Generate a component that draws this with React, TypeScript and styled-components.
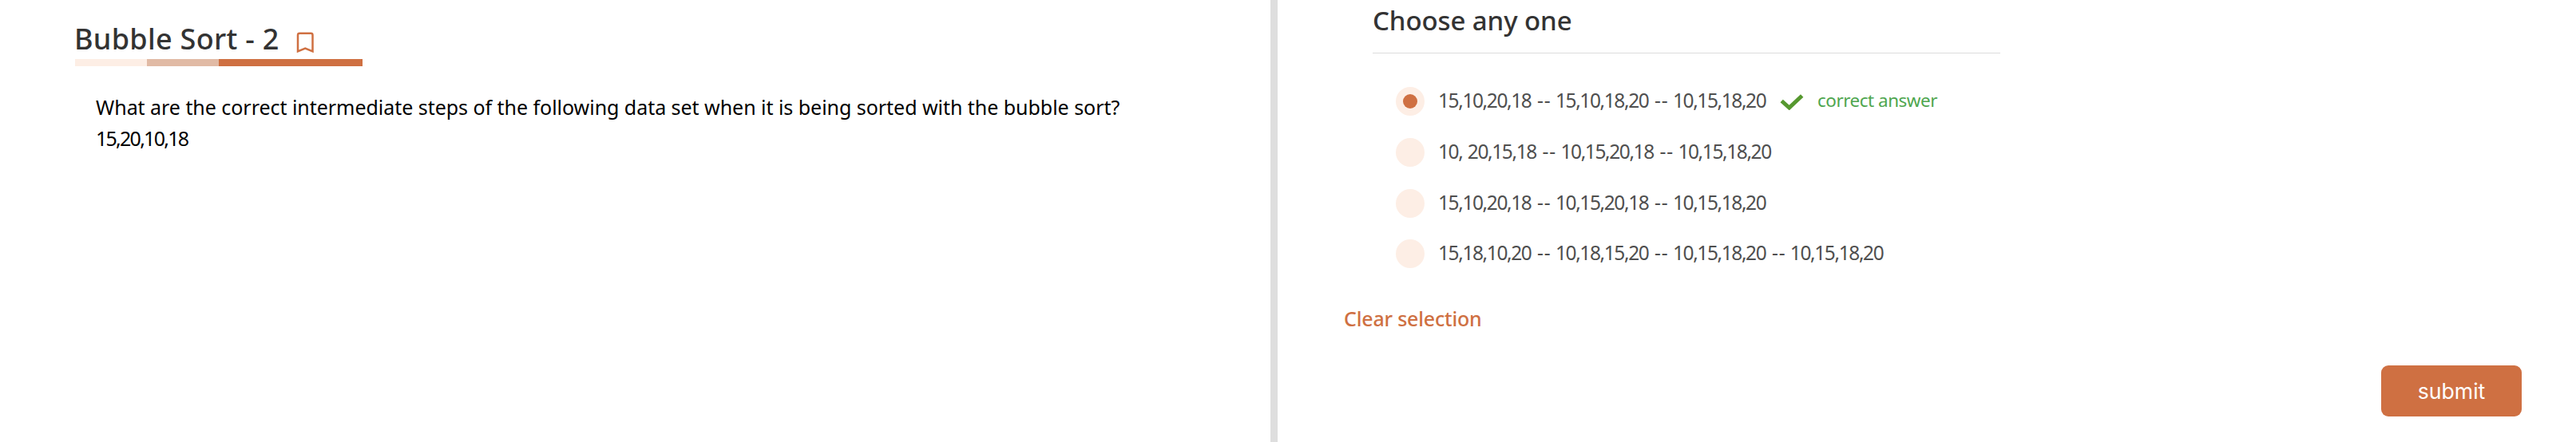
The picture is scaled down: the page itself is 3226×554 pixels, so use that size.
import React, { Fragment } from "react";
import styled, { createGlobalStyle } from "styled-components";

const accent = "#cf7042";

const GlobalStyle = createGlobalStyle`
  *, *::before, *::after { box-sizing: border-box; }
  body { margin: 0; background: #fff; font-family: "Noto Sans", "Open Sans", sans-serif; }
`;

const Page = styled.main`
  display: flex;
  height: 554px;
  overflow: hidden;
`;

const QuestionPane = styled.section`
  width: 1591px;
  flex: none;
  padding: 29px 0 0 94px;
`;

const Divider = styled.div`
  width: 9px;
  flex: none;
  background: #dedede;
`;

const AnswerPane = styled.section`
  flex: 1;
  display: flex;
  flex-direction: column;
  padding: 6px 68px 32px 82px;
`;

const TextLine = styled.span<{ $tracking?: number; $words?: number }>`
  display: block;
  white-space: nowrap;
  letter-spacing: ${(p) => p.$tracking ?? 0}px;
  word-spacing: ${(p) => p.$words ?? 0}px;
`;

const Separator = styled.span`
  margin: 0 -1.2px 0 1.2px;
  letter-spacing: 1px;
  word-spacing: -1px;
`;

const TitleRow = styled.header`
  display: flex;
  height: 45px;
`;

const Title = styled.h1`
  margin: 0 0 0 -1px;
  width: 278px;
  font-size: 36px;
  line-height: 40px;
  font-weight: 500;
  color: #333;
`;

const BookmarkIcon = styled.svg`
  margin-top: 11px;
  width: 23px;
  height: 28px;
`;

const Underline = styled.div`
  display: flex;
  width: 360px;
  height: 9px;
`;

const Segment = styled.span<{ $grow: number; $color: string }>`
  flex: ${(p) => p.$grow};
  background: ${(p) => p.$color};
`;

const Question = styled.div`
  margin: 32px 0 0 26px;
  font-size: 25px;
  line-height: 39px;
  color: #000;
`;

const Prompt = styled.h2`
  margin: 0 0 0 37px;
  width: 786px;
  height: 61px;
  border-bottom: 1px solid #dcdcdc;
  font-size: 33px;
  line-height: 40px;
  font-weight: 500;
  color: #333;
`;

const Options = styled.div`
  margin: 42px 0 0 66px;
  height: 255px;
`;

const Option = styled.label`
  display: flex;
  align-items: flex-start;
  height: 63.75px;
  font-size: 24.5px;
  line-height: 33px;
  color: #4f4f4f;
`;

const Radio = styled.span`
  display: flex;
  align-items: center;
  justify-content: center;
  flex: none;
  width: 36px;
  height: 36px;
  margin-right: 17px;
  border-radius: 50%;
  background: #fdeee5;
`;

const Dot = styled.span`
  width: 18px;
  height: 18px;
  border-radius: 50%;
  background: ${accent};
`;

const OptionText = styled.span<{ $width?: number }>`
  width: ${(p) => (p.$width ? `${p.$width}px` : "auto")};
`;

const CheckIcon = styled.svg`
  width: 30px;
  height: 21px;
  margin: 8px 17px 0 0;
`;

const Correct = styled.span`
  font-size: 22.5px;
  line-height: 34px;
  color: #4ea64f;
`;

const ClearButton = styled.button`
  align-self: flex-start;
  margin: 15px 0 0 1px;
  padding: 0;
  border: 0;
  background: none;
  font: 500 25px/40px "Noto Sans", sans-serif;
  color: ${accent};
`;

const SubmitButton = styled.button`
  align-self: flex-end;
  margin-top: auto;
  width: 176px;
  height: 64px;
  padding: 0;
  border: 0;
  border-radius: 9px;
  background: ${accent};
  color: #fff;
  font: 400 26.67px/62px Inter, sans-serif;
`;

const options = [
  ["15,10,20,18", "15,10,18,20", "10,15,18,20"],
  ["10, 20,15,18", "10,15,20,18", "10,15,18,20"],
  ["15,10,20,18", "10,15,20,18", "10,15,18,20"],
  ["15,18,10,20", "10,18,15,20", "10,15,18,20", "10,15,18,20"],
];

export default function App() {
  return (
    <>
      <GlobalStyle />
      <Page>
        <QuestionPane>
          <TitleRow>
            <Title><TextLine $tracking={0.3}>Bubble Sort - 2</TextLine></Title>
            <BookmarkIcon viewBox="0 0 23 28" fill="none">
              <path d="M2 24.300V4Q2 1.800 4.200 1.800H18.300Q20.500 1.800 20.500 4V24.300L11.250 20.600Z" stroke={accent} strokeWidth="2.500" />
            </BookmarkIcon>
          </TitleRow>
          <Underline>
            <Segment $grow={1} $color="#fdeee5" />
            <Segment $grow={1} $color="#e1baa5" />
            <Segment $grow={2} $color={accent} />
          </Underline>
          <Question>
            <TextLine $tracking={-0.036}>
              What are the correct intermediate steps of the following data set when it is being sorted with the bubble sort?
            </TextLine>
            <TextLine $tracking={-1.75}>15,20,10,18</TextLine>
          </Question>
        </QuestionPane>
        <Divider />
        <AnswerPane>
          <Prompt><TextLine $tracking={-0.1}>Choose any one</TextLine></Prompt>
          <Options role="radiogroup">
            {options.map((steps, i) => (
              <Option key={i}>
                <Radio>{i === 0 && <Dot />}</Radio>
                <OptionText $width={i === 0 ? 428 : undefined}>
                  <TextLine $tracking={-1.4} $words={1.5}>
                    {steps.map((step, n) => (
                      <Fragment key={n}>
                        {n > 0 && <Separator>{" -- "}</Separator>}
                        {step}
                      </Fragment>
                    ))}
                  </TextLine>
                </OptionText>
                {i === 0 && (
                  <>
                    <CheckIcon viewBox="0 0 30 21">
                      <path d="M2.200 9.500L11.700 18L27.700 3" fill="none" stroke="#56982f" strokeWidth="5" />
                    </CheckIcon>
                    <Correct><TextLine $tracking={-0.5}>correct answer</TextLine></Correct>
                  </>
                )}
              </Option>
            ))}
          </Options>
          <ClearButton><TextLine $tracking={-0.2}>Clear selection</TextLine></ClearButton>
          <SubmitButton>submit</SubmitButton>
        </AnswerPane>
      </Page>
    </>
  );
}
